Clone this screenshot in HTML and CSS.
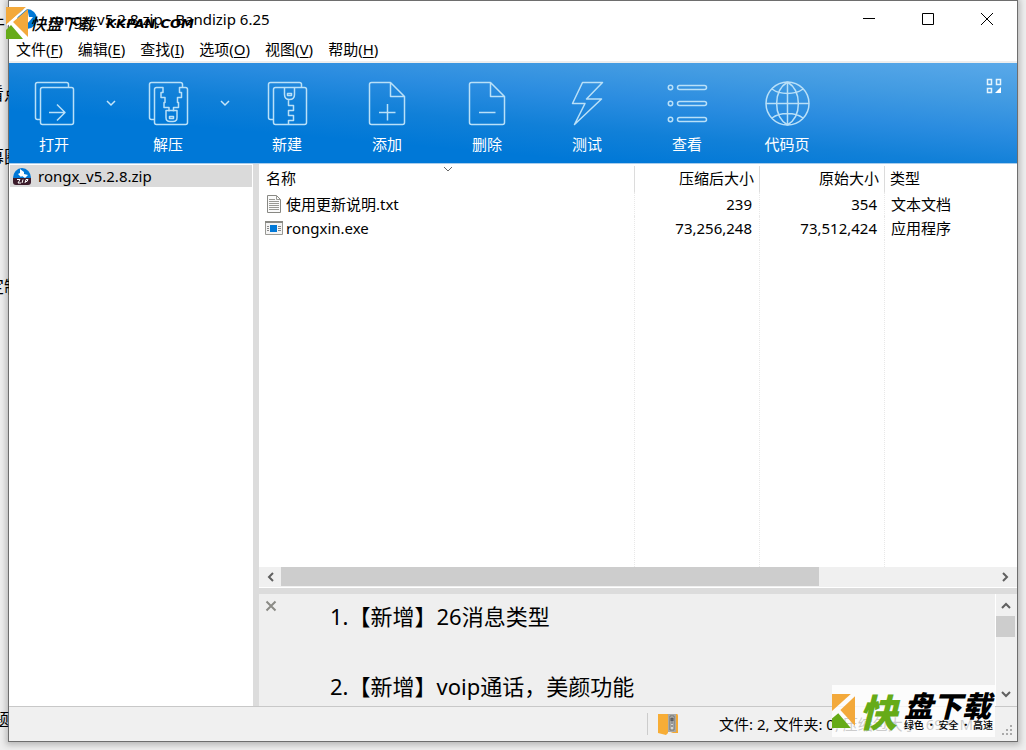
FILE: index.html
```html
<!DOCTYPE html>
<html lang="zh-CN">
<head>
<meta charset="utf-8">
<title>rongx_v5.2.8.zip - Bandizip 6.25</title>
<link rel="stylesheet" href="styles.css">
</head>
<body>
<div class="window">
  <header class="titlebar">
    <svg class="app-icon" viewBox="0 0 20 20"><circle cx="10" cy="10" r="10" fill="#0078d7"/><path d="M11 3l1 5h4l-6 7-1-5H5z" fill="#fff"/></svg>
    <h1 class="title">rongx_v5.2.8.zip - Bandizip 6.25</h1>
    <div class="winbtns">
      <button aria-label="最小化"><svg viewBox="0 0 14 14"><path d="M1 6.500h12" stroke="#000" fill="none"/></svg></button>
      <button aria-label="最大化"><svg viewBox="0 0 14 14"><path d="M1.500 1.500h11v11h-11z" stroke="#000" fill="none"/></svg></button>
      <button aria-label="关闭"><svg viewBox="0 0 14 14"><path d="M1 1l12 12M13 1L1 13" stroke="#000" fill="none"/></svg></button>
    </div>
  </header>
  <nav class="menu">
    <button>文件(<u>F</u>)</button>
    <button>编辑(<u>E</u>)</button>
    <button>查找(<u>I</u>)</button>
    <button>选项(<u>O</u>)</button>
    <button>视图(<u>V</u>)</button>
    <button>帮助(<u>H</u>)</button>
  </nav>
  <div class="toolbar">
    <button class="tool narrow"><svg viewBox="0 0 48 48"><path d="M10 40.500H7.500q-2 0-2-2V5.500q0-2 2-2h29q2 0 2 2V8M12.500 8.500h29q2 0 2 2v33q0 2-2 2h-29q-2 0-2-2v-33q0-2 2-2zM19 33.500h15.500M27 25.500l8 8-8 8"/></svg>打开</button>
    <button class="drop" aria-label="打开选项"><svg viewBox="0 0 10 8"><path d="M1 2l4 4 4-4"/></svg></button>
    <button class="tool narrow"><svg viewBox="0 0 48 48"><path d="M10 40.500H7.500q-2 0-2-2V5.500q0-2 2-2h29q2 0 2 2V8M12.500 8.500h6.500v5h-2v5h4v5h-1v5h5v4M37 8.500h4.500q2 0 2 2v33q0 2-2 2h-29q-2 0-2-2v-33q0-2 2-2M41 8.500h-5.500v5h2v5h-4v5h1v5h-5v4M22 31.500h11v7q0 4-4 4h-3q-4 0-4-4zM25.500 37.500h4v2h-4z"/></svg>解压</button>
    <button class="drop" aria-label="解压选项"><svg viewBox="0 0 10 8"><path d="M1 2l4 4 4-4"/></svg></button>
    <button class="tool"><svg viewBox="0 0 48 48"><path d="M10 40.500H7.500q-2 0-2-2V5.500q0-2 2-2h29q2 0 2 2V8M12.500 8.500h29q2 0 2 2v33q0 2-2 2h-29q-2 0-2-2v-33q0-2 2-2zM21.500 8.500v7q0 5 5 5t5-5v-7M24.500 14.500h4v2h-4zM25.500 20.500v6h5v5h-5v5h5v5h-5v4"/></svg>新建</button>
    <button class="tool"><svg viewBox="0 0 48 48"><path d="M8.500 3.500h19l14 14v26q0 2-2 2h-31q-2 0-2-2v-38q0-2 2-2zM27.500 3.500v14h14M24.500 25v16.500M16 33.500h16.500"/></svg>添加</button>
    <button class="tool"><svg viewBox="0 0 48 48"><path d="M8.500 3.500h19l14 14v26q0 2-2 2h-31q-2 0-2-2v-38q0-2 2-2zM27.500 3.500v14h14M16 33.500h16.500"/></svg>删除</button>
    <button class="tool"><svg viewBox="0 0 48 48"><path d="M19.500 3.500h20l-16 16.500h15L11.500 45.500l10.500-21H9.500z"/></svg>测试</button>
    <button class="tool"><svg viewBox="0 0 48 48"><circle cx="7.500" cy="8.500" r="2.200"/><circle cx="7.500" cy="24.500" r="2.200"/><circle cx="7.500" cy="40.500" r="2.200"/><rect x="14.500" y="6.500" width="29" height="4" rx="2"/><rect x="14.500" y="22.500" width="29" height="4" rx="2"/><rect x="14.500" y="38.500" width="29" height="4" rx="2"/></svg>查看</button>
    <button class="tool"><svg viewBox="0 0 48 48"><circle cx="24.500" cy="24.500" r="21.500"/><path d="M24.500 3v43M3 24.500h43M24.500 3C10 12 10 37 24.500 46M24.500 3C39 12 39 37 24.500 46M9 10c8 6 23 6 31 0M9 39c8-6 23-6 31 0"/></svg>代码页</button>
    <button class="layout-btn" aria-label="布局"><svg viewBox="0 0 16 16"><path d="M1.500 1.500h4v5h-4zM10.500 1.500h4v5h-4zM1.500 10.500h4v4h-4z"/><path class="solid" d="M15 9v6H9z"/></svg></button>
  </div>
  <main class="content">
    <aside class="tree">
      <button class="node"><svg viewBox="0 0 20 20"><path d="M1 12a9 10 0 1 1 18 0z" fill="#0078d7"/><path d="M8 3l4 3 0 2 4 1-3 3-3-2-1 1-3-3 2-1z" fill="#fff"/><path d="M1 12h18v4q0 3-3 3H4q-3 0-3-3z" fill="#3c1c2b"/><path d="M5 13.500h3l-2 3.500h3M11 13.500l-1 3.500M13 17l1-3.500h2l-1 2h-2" stroke="#fff" stroke-width="1" fill="none"/></svg>rongx_v5.2.8.zip</button>
    </aside>
    <section class="right">
      <div class="files">
        <svg class="sort" viewBox="0 0 10 6"><path d="M1 1l4 4 4-4" stroke="#666" fill="none"/></svg>
        <table>
          <thead><tr><th class="c-name">名称</th><th class="c-size num">压缩后大小</th><th class="c-size num">原始大小</th><th>类型</th></tr></thead>
          <tbody>
            <tr><td><span class="file"><svg viewBox="0 0 18 18"><path d="M2.500.5h9l4 4v13h-13z" fill="#fafafa" stroke="#888883"/><path d="M11.500.5v4h4M4 4.500h6M4 6.500h10M4 8.500h10M4 10.500h10M4 12.500h10M4 14.500h10" stroke="#999994" fill="none"/></svg>使用更新说明.txt</span></td><td class="num">239</td><td class="num">354</td><td>文本文档</td></tr>
            <tr><td><span class="file"><svg viewBox="0 0 18 18"><path d="M.5 2.500h17v13H.5z" fill="#f4f4f4" stroke="#999994"/><path d="M0 3h18" stroke="#888883" stroke-width="2"/><path d="M5 6h7v7H5z" fill="#0078d7"/><path d="M2 7.500h2M2 9.500h2M2 11.500h2M13 7.500h3M13 9.500h3M13 11.500h3" stroke="#888"/></svg>rongxin.exe</span></td><td class="num">73,256,248</td><td class="num">73,512,424</td><td>应用程序</td></tr>
            <tr class="rest"><td></td><td></td><td></td><td></td></tr>
          </tbody>
        </table>
      </div>
      <div class="hscroll">
        <button aria-label="向左"><svg viewBox="0 0 12 12"><path d="M8 2L4 6l4 4"/></svg></button>
        <div class="track"><div class="thumb"></div></div>
        <button aria-label="向右"><svg viewBox="0 0 12 12"><path d="M4 2l4 4-4 4"/></svg></button>
      </div>
      <div class="notes">
        <button class="close" aria-label="关闭注释"><svg viewBox="0 0 12 12"><path d="M1.500 1.500l9 9M10.500 1.500l-9 9" stroke="#8b8b86" stroke-width="2" fill="none"/></svg></button>
        <div class="comment"><p>1.【新增】26消息类型</p><p>2.【新增】voip通话，美颜功能</p></div>
        <div class="vscroll">
          <button aria-label="向上"><svg viewBox="0 0 12 12"><path d="M2 8l4-4 4 4"/></svg></button>
          <div class="track"><div class="thumb"></div></div>
          <button aria-label="向下"><svg viewBox="0 0 12 12"><path d="M2 4l4 4 4-4"/></svg></button>
        </div>
      </div>
    </section>
  </main>
  <footer class="status">
    <div class="status-in">
      <svg class="folder" viewBox="0 0 20 22"><path d="M0 1h19q1 0 1 2v17h-5l-5-2H0z" fill="#f3a934"/><path d="M0 1h9l1 2v17l-2 2-8-2z" fill="#f7ad36"/><path d="M10 1h8v18h-8z" fill="#a9a9a6"/><path d="M12 3h4v14h-4z" fill="#d5d5d2" stroke="#73736f"/><path d="M13 5h2v3h-2zM13 10h2M13 13h2" stroke="#55555a" fill="#777"/></svg>
      <span>文件: 2, 文件夹: 0, 压缩包大小: 69.9 MB</span>
    </div>
    <svg class="grip" viewBox="0 0 12 12"><path d="M9 1h2M9 5h2M5 5h2M9 9h2M5 9h2M1 9h2" stroke="#aaa" stroke-width="2"/></svg>
  </footer>
</div>
<div class="behind" aria-hidden="true">
  <span class="frag frag-a">牛</span>
  <span class="frag frag-b">看点</span>
  <span class="frag frag-c">幕圈</span>
  <span class="frag frag-d">定制</span>
  <span class="frag frag-e">题</span>
</div>
<div class="mark-top">
  <svg viewBox="0 0 22 32" preserveAspectRatio="none"><path d="M0 0h20L0 18z" fill="#f3a93b"/><path d="M22 2v28L7 15z" fill="#f3a93b"/><path d="M5 18l12 14H0v-9z" fill="#66ab18"/><path d="M22 0L1 18M5 15l16 17" stroke="#fff" stroke-width="2"/></svg>
  <span>快盘下载</span><b>KKPAN.COM</b>
</div>
<div class="mark-bottom">
  <svg viewBox="0 0 22 32" preserveAspectRatio="none"><path d="M0 0h18L0 16z" fill="#f3a93b"/><path d="M22 2v28L8 15z" fill="#f3a93b"/><path d="M6 18l12 14H0v-9z" fill="#66ab18"/></svg>
  <span class="kuai">快</span>
  <div class="mark-text"><span class="pan">盘下载</span><span class="slogan">绿色 · 安全 · 高速</span></div>
</div>
</body>
</html>
```
FILE: styles.css
```css
* { box-sizing: border-box; }
body {
  margin: 0;
  height: 100vh;
  min-height: 480px;
  padding: 0 8px 8px;
  position: relative;
  overflow: hidden;
  background: #eeeeee;
  font: 15px/24px "Noto Sans", "Noto Sans CJK SC", sans-serif;
  color: #000;
}
button {
  font: inherit;
  color: inherit;
  border: 0;
  padding: 0;
  margin: 0;
  background: none;
}
svg { display: block; flex: none; }

.behind { position: absolute; left: 0; top: 0; bottom: 0; width: 9px; overflow: hidden; font-size: 17px; }
.frag { position: absolute; white-space: nowrap; }
.frag-a { left: -12px; top: 12px; }
.frag-b { left: -13px; top: 82px; }
.frag-c { left: -13px; top: 145px; }
.frag-d { left: -13px; top: 275px; }
.frag-e { left: -8px; top: 708px; }

.window {
  position: relative;
  height: 100%;
  display: flex;
  flex-direction: column;
  background: #fff;
  border: 1px solid #6e6e6e;
  box-shadow: 0 1px 6px 2px #b8b8b8;
}
.titlebar { display: flex; align-items: center; height: 36px; padding-left: 8px; flex: none; }
.app-icon { width: 20px; height: 20px; }
.title { margin: 0 auto 0 12px; font-size: 15px; font-weight: 400; }
.winbtns { display: flex; padding-right: 1px; }
.winbtns button { width: 59px; height: 36px; display: grid; place-items: center; }
.winbtns svg { width: 14px; height: 14px; }
.menu {
  display: flex;
  gap: 15px;
  height: 26px;
  padding-left: 7px;
  border-bottom: 2px solid #eee;
  line-height: 24px;
  flex: none;
}
.menu u { text-underline-offset: 2px; }

.toolbar {
  display: flex;
  height: 101px;
  flex: none;
  border-bottom: 1px solid #a9cdec;
  background: linear-gradient(5deg, #0078d7 28%, #1180d8 45%, #2a8ce0 62%, #429be2 80%, #5aa9e9 100%);
  color: #fff;
}
.tool {
  width: 100px;
  padding-top: 16px;
  display: flex;
  flex-direction: column;
  align-items: center;
  gap: 5px;
}
.narrow { width: 90px; }
.tool svg { width: 48px; height: 48px; fill: none; stroke: #b9e0f8; stroke-width: 1.5; stroke-linejoin: round; }
.drop { width: 24px; display: flex; justify-content: center; padding-top: 36px; }
.drop svg { width: 10px; height: 8px; fill: none; stroke: #c5e5f9; stroke-width: 1.5; }
.layout-btn { margin-left: auto; padding: 15px; align-self: flex-start; }
.layout-btn svg { width: 16px; height: 16px; fill: none; stroke: #e3f4fd; stroke-width: 1.5; }
.layout-btn .solid { fill: #fff; stroke: none; }

.content { flex: 1; min-height: 0; display: flex; border-bottom: 1px solid #c8c8c8; }
.tree { width: 250px; flex: none; padding: 1px; border-right: 6px solid #dcdcdc; }
.node {
  width: 100%;
  height: 22px;
  padding-left: 2px;
  display: flex;
  align-items: center;
  gap: 6px;
  background: #dadada;
}
.node svg { width: 20px; height: 20px; }

.right { flex: 1; min-width: 0; display: flex; flex-direction: column; }
.files { flex: 1; min-height: 0; position: relative; padding-top: 2px; }
.sort { position: absolute; left: 184px; top: 2px; width: 10px; height: 6px; }
table { width: 100%; height: 100%; table-layout: fixed; border-collapse: separate; border-spacing: 0; }
th, td { height: 24px; font-weight: 400; text-align: left; white-space: nowrap; border-left: 1px dotted #e8e8e8; }
th { height: 25px; border-left: 1px solid #dcdcdc; padding: 0 5px 2px; }
td { padding: 0 7px 0 6px; }
th:first-child { border-left: 0; padding-left: 7px; }
td:first-child { border-left: 0; }
.rest td { height: auto; }
.c-name { width: 375px; }
.c-size { width: 125px; }
.num { text-align: right; }
.file { display: flex; align-items: center; gap: 3px; }
.file svg { width: 18px; height: 18px; }

.hscroll { display: flex; height: 21px; padding: 0 2px 0 1px; background: #f0f0f0; border-bottom: 1px solid #fff; flex: none; }
.hscroll .track { flex: 1; }
.hscroll .thumb { width: 75.5%; height: 19px; background: #cdcdcd; }
.hscroll button { width: 21px; height: 20px; display: grid; place-items: center; flex: none; }
.vscroll button { width: 20px; height: 20px; display: grid; place-items: center; flex: none; }
.hscroll svg, .vscroll svg { width: 12px; height: 12px; fill: none; stroke: #606060; stroke-width: 2; }

.notes { display: flex; height: 118px; flex: none; border-top: 6px solid #dcdcdc; background: #efefef; }
.close { padding: 6px; align-self: flex-start; }
.close svg { width: 12px; height: 12px; }
.comment { flex: 1; min-width: 0; padding-left: 47px; overflow: hidden; font-size: 22px; line-height: 44px; }
.comment p { margin: 0 0 26px; white-space: nowrap; }
.vscroll { display: flex; flex-direction: column; border-left: 1px solid #fff; background: #f0f0f0; padding: 2px 1px 2px 0; }
.vscroll .track { flex: 1; }
.vscroll .thumb { width: 19px; height: 21px; background: #cdcdcd; }

.status { height: 34px; flex: none; display: flex; justify-content: flex-end; align-items: center; background: #f0f0f0; }
.status-in { width: 370px; height: 22px; padding-left: 10px; display: flex; align-items: center; border-left: 1px solid #ccc; white-space: nowrap; }
.folder { width: 20px; height: 22px; margin-right: 41px; }
.grip { position: absolute; right: 4px; bottom: 4px; width: 12px; height: 12px; }

.mark-top { position: absolute; left: 6px; top: 7px; display: flex; align-items: center; gap: 2px; }
.mark-top svg { width: 22px; height: 32px; }
.mark-top span { font: italic 500 16px/32px "Noto Sans CJK SC", sans-serif; }
.mark-top b { padding-left: 10px; font: italic bold 13px "DejaVu Sans", sans-serif; }
.mark-bottom {
  position: absolute;
  right: 31px;
  bottom: 13px;
  width: 163px;
  height: 52px;
  display: flex;
  align-items: center;
  gap: 4px;
  background: rgba(255, 255, 255, 0.8);
  font-family: "Noto Sans CJK SC", sans-serif;
  font-weight: 900;
  white-space: nowrap;
}
.mark-bottom svg { width: 23px; height: 34px; }
.kuai { font-size: 38px; line-height: 44px; font-style: italic; color: #66ab18; }
.mark-text { display: flex; flex-direction: column; padding-left: 3px; }
.pan { font-size: 29px; line-height: 28px; font-style: italic; }
.slogan { font-size: 10px; line-height: 14px; font-weight: 500; }
```
